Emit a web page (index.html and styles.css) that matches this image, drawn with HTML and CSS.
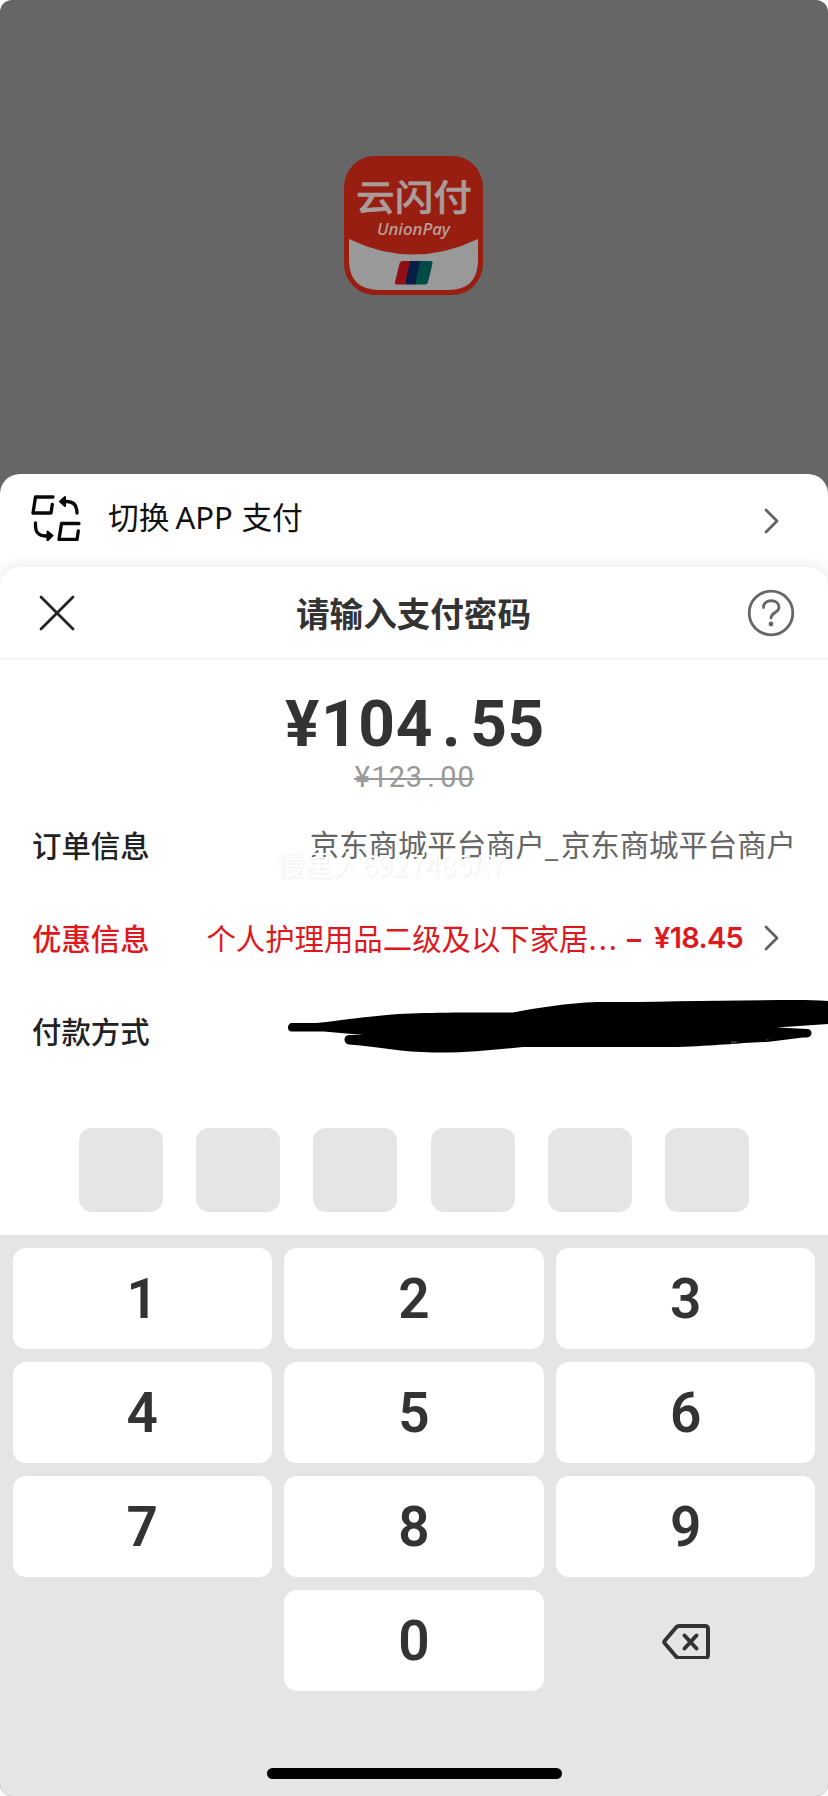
FILE: index.html
```html
<!DOCTYPE html>
<html lang="zh-CN">
<head>
<meta charset="utf-8">
<title>请输入支付密码</title>
<link rel="stylesheet" href="styles.css">
</head>
<body>
<main class="screen">
  <section class="backdrop">
    <svg class="logo" viewBox="0 0 140 140" role="img" aria-label="云闪付">
      <rect width="139" height="139" rx="31" fill="#991e12"/>
      <path d="M5 83Q69 114 134 83V104Q134 134 104 134H36Q5 134 5 104Z" fill="#999"/>
      <text class="logo-cn" x="12" y="55" textLength="116" lengthAdjust="spacingAndGlyphs">云闪付</text>
      <text class="logo-en" x="33" y="79" textLength="73" lengthAdjust="spacingAndGlyphs">UnionPay</text>
      <path d="M58.500 105H67L61 128.500H53Q50.500 128.500 51 126L55.500 107.500Q56 105 58.500 105Z" fill="#920f16"/>
      <path d="M66 105H77L72 128.500H61Z" fill="#061d45"/>
      <path d="M76 105H86Q89 105 88.500 107.500L84 126Q83.500 128.500 81 128.500H71Z" fill="#004b45"/>
    </svg>
  </section>

  <section class="switch">
    <svg class="switch-icon" viewBox="0 0 50 46" fill="none" stroke="#080808" stroke-width="3.300" stroke-linecap="round" stroke-linejoin="round">
      <path d="M22 2H4.500L2 18H20L21.300 9.500"/>
      <path d="M48 28.500H30.500L28 44.500H46L47.300 36"/>
      <path d="M31 6.500H36C42 6.500 46 10 46 18"/>
      <path d="M34 2L29 6.500L34 11Z" fill="#080808" stroke-width="2"/>
      <path d="M4.500 28V31C4.500 37 8 41 14 41H18"/>
      <path d="M16.500 36.500L21.500 40.500L16.500 45.500Z" fill="#080808" stroke-width="2"/>
    </svg>
    <span class="switch-text"><span>切换</span><span class="app">APP</span><span>支付</span></span>
    <svg class="chevron" viewBox="0 0 16 26"><path d="M2 2L13 13L2 24"/></svg>
  </section>

  <section class="sheet">
    <header class="head">
      <svg class="close" viewBox="0 0 36 36"><path d="M2 2L34 34M34 2L2 34"/></svg>
      <h1 class="title">请输入支付密码</h1>
      <svg class="help" viewBox="0 0 48 48">
        <circle cx="24" cy="24" r="21.800"/>
        <path d="M16.500 18.500C16.500 9.500 32 9.500 32 18.500C32 23.500 24 23.500 24 29"/>
        <circle class="dot" cx="24" cy="35" r="2.400"/>
      </svg>
    </header>
    <div class="amount"><span>¥</span><span>1</span><span>0</span><span>4</span><span>.</span><span>5</span><span>5</span></div>
    <div class="was"><span>¥</span><span>1</span><span>2</span><span>3</span><span>.</span><span>0</span><span>0</span></div>

    <div class="rows">
      <div class="row">
        <span class="label">订单信息</span>
        <span class="value">京东商城平台商户<span class="underscore">_</span>京东商城平台商户</span>
        <span class="watermark">慢星人6927485AY</span>
      </div>
      <div class="row promo">
        <span class="label">优惠信息</span>
        <span class="value">个人护理用品二级及以下家居<span class="dots">...</span></span>
        <span class="minus">–</span>
        <span class="discount">¥18.45</span>
        <svg class="chevron" viewBox="0 0 16 26"><path d="M2 2L13 13L2 24"/></svg>
      </div>
      <div class="row">
        <span class="label">付款方式</span>
        <svg class="scribble" viewBox="0 0 541 54">
          <path d="M4 23C0 24 0 31 4 31.500H37L76 35H62C56 35 56 44 62 44.500C94 47 114 52 146 52.500C180 53 206 50 236 47H390C430 46 450 43 480 42L516 37.500H520C526 37 526 29 520 29L490 27.500L541 24V1C530 0 520 0 510 0C440 0 370 2 310 2C280 3 250 8 226 12.500C180 12.500 120 12 90 16C60 19 40 22 30 23Z"/>
          <path d="M444 41H450V44H444ZM479 39H482L480 41.500Z" fill="#333"/>
        </svg>
      </div>
    </div>

    <div class="pins"><i class="pin"></i><i class="pin"></i><i class="pin"></i><i class="pin"></i><i class="pin"></i><i class="pin"></i></div>
  </section>

  <section class="keypad">
    <div class="keys">
      <button class="key">1</button><button class="key">2</button><button class="key">3</button>
      <button class="key">4</button><button class="key">5</button><button class="key">6</button>
      <button class="key">7</button><button class="key">8</button><button class="key">9</button>
      <span></span><button class="key">0</button>
      <button class="key key-del" aria-label="删除">
        <svg class="del" viewBox="0 0 48 36"><path d="M17 3H43Q46 3 46 6V32Q46 35 43 35H17Q15.500 35 14 33.500L2.500 20Q2 19 2.500 18L14 4.500Q15.500 3 17 3Z"/><path d="M22.500 12.500L34.500 25.500M34.500 12.500L22.500 25.500"/></svg>
      </button>
    </div>
    <div class="home"></div>
  </section>
</main>
</body>
</html>
```
FILE: styles.css
```css
* { box-sizing: border-box; }
body { margin: 0; background: #fff; font-family: "Noto Sans CJK SC", sans-serif; color: #333; }
.screen { display: flex; flex-direction: column; width: 828px; height: 1796px; overflow: hidden; border-radius: 12px; background: #666; }

.backdrop { display: flex; justify-content: center; height: 474px; padding-top: 156px; flex: none; }
.logo { width: 140px; height: 140px; }
.logo-cn { font: 500 36px "Noto Sans CJK SC", sans-serif; fill: #a99c9a; stroke: #a99c9a; stroke-width: .5; stroke-linejoin: round; }
.logo-en { font: italic 500 16px "Noto Sans", sans-serif; fill: #b9a09c; }

.switch { display: flex; align-items: center; flex: none; height: 123px; padding: 0 48px 30px 31px; border-radius: 20px 20px 0 0; background: #fff; }
.switch-icon { width: 50px; height: 46px; margin-top: -6px; }
.switch-text { display: flex; flex: 1; align-items: baseline; gap: 6px; margin: -9px 0 0 27px; font-size: 30.7px; line-height: 40px; color: #111; }
.app { font-family: "Noto Sans", sans-serif; font-size: 31px; width: 60px; }
.chevron { flex: none; width: 16px; height: 26px; fill: none; stroke: #606060; stroke-width: 2.8; stroke-linecap: round; stroke-linejoin: round; }

.sheet { flex: none; height: 668px; margin-top: -30px; border-radius: 20px 20px 0 0; background: #fff; box-shadow: 0 0 16px rgba(0, 0, 0, .11); }
.head { display: flex; align-items: center; justify-content: space-between; height: 93px; padding: 0 33px 0 39px; border-bottom: 2px solid #f4f4f4; }
.close { width: 36px; height: 36px; fill: none; stroke: #222; stroke-width: 2.8; stroke-linecap: round; }
.title { margin: 0 0 0 -7px; font-size: 33.6px; font-weight: 600; line-height: 48px; }
.help { width: 48px; height: 48px; fill: none; stroke: #666; stroke-width: 2.8; stroke-linecap: round; margin-left: -12px; }
.help .dot { fill: #666; stroke: none; }

.amount { display: grid; grid-template-columns: repeat(7, 37.3px); justify-content: center; margin-top: 28px; font: 700 64px/74px Roboto, sans-serif; text-align: center; }
.was { display: grid; grid-template-columns: repeat(7, 17.2px); width: max-content; margin: -2px auto 0; font: 400 29px/34px Roboto, sans-serif; text-align: center; color: #999; background: linear-gradient(#999, #999) 0 18px / 100% 2px no-repeat; }

.rows { margin-top: 3px; padding: 0 32px; }
.row { position: relative; display: flex; align-items: center; height: 93px; font-size: 29.4px; line-height: 40px; white-space: nowrap; }
.label { flex: 1; font-weight: 500; color: #222; }
.value { color: #666; }
.underscore { display: inline-block; width: 16px; font-family: "Noto Sans", sans-serif; }
.watermark { position: absolute; left: 244px; top: 47px; font-size: 28.5px; color: #fff; text-shadow: 1px 1px 2px rgba(0, 0, 0, .08); }
.promo .label, .promo .value, .minus, .discount { color: #df1820; }
.promo .chevron { margin: 2px 16px 0 20px; }
.dots { letter-spacing: 2px; }
.minus { width: 17px; margin: 4px 10px 0 8px; font: 600 28px/40px Inter, sans-serif; }
.discount { width: 90px; margin-top: 3px; font: 600 29px/40px Inter, sans-serif; letter-spacing: -.7px; }
.scribble { width: 541px; height: 54px; margin: -5px -32px 0 0; fill: #000; }

.pins { display: flex; justify-content: center; gap: 33.1px; margin-top: 52px; }
.pin { width: 84px; height: 84px; border-radius: 13px; background: #e5e5e5; }

.keypad { flex: 1; padding: 13px 12.500px 0; background: #e5e5e5; }
.keys { display: grid; grid-template-columns: repeat(3, 1fr); grid-auto-rows: 101px; gap: 13px 12px; }
.key { display: flex; align-items: center; justify-content: center; padding: 0; border: 0; border-radius: 13px; background: #fff; color: #333; font: 600 55px/64px Roboto, sans-serif; }
.key-del { background: none; }
.del { width: 48px; height: 36px; margin-top: 1px; fill: none; stroke: #333; stroke-width: 4; stroke-linecap: round; }
.home { width: 295px; height: 11px; margin: 77px auto 0; border-radius: 6px; background: #000; }
```
